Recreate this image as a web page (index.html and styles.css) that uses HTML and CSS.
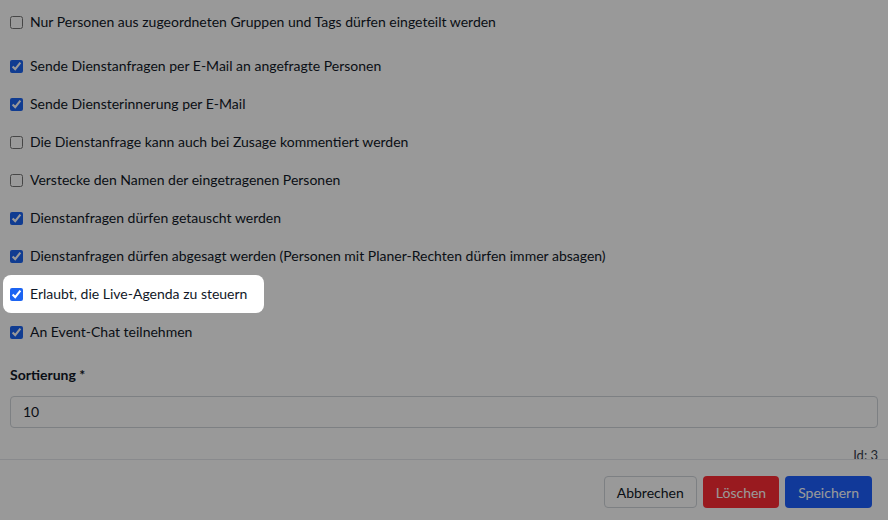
FILE: index.html
```html
<!DOCTYPE html>
<html lang="de">
<head>
<meta charset="utf-8">
<link rel="stylesheet" href="styles.css">
</head>
<body>
<div class="modal">
  <div class="modal-body">
    <div class="group first">
      <label class="row"><input type="checkbox"><span>Nur Personen aus zugeordneten Gruppen und Tags dürfen eingeteilt werden</span></label>
    </div>
    <div class="group">
      <label class="row"><input type="checkbox" checked><span>Sende Dienstanfragen per E-Mail an angefragte Personen</span></label>
      <label class="row"><input type="checkbox" checked><span>Sende Diensterinnerung per E-Mail</span></label>
      <label class="row"><input type="checkbox"><span>Die Dienstanfrage kann auch bei Zusage kommentiert werden</span></label>
      <label class="row"><input type="checkbox"><span>Verstecke den Namen der eingetragenen Personen</span></label>
      <label class="row"><input type="checkbox" checked><span>Dienstanfragen dürfen getauscht werden</span></label>
      <label class="row"><input type="checkbox" checked><span>Dienstanfragen dürfen abgesagt werden (Personen mit Planer-Rechten dürfen immer absagen)</span></label>
      <label class="row spot"><input type="checkbox" checked><span>Erlaubt, die Live-Agenda zu steuern</span></label>
      <label class="row"><input type="checkbox" checked><span>An Event-Chat teilnehmen</span></label>
    </div>
    <div class="field">
      <div class="field-label">Sortierung <span class="req">*</span></div>
      <div class="input">10</div>
    </div>
    <div class="meta">Id: 3</div>
  </div>
  <div class="modal-footer">
    <button class="btn btn-light">Abbrechen</button>
    <button class="btn btn-danger">Löschen</button>
    <button class="btn btn-primary">Speichern</button>
  </div>
  <div class="overlay"></div>
</div>
</body>
</html>
```

FILE: styles.css
```css
html, body {
  margin: 0;
  padding: 0;
  background: #fff;
}
body {
  font-family: Lato, "Noto Sans", sans-serif;
  font-size: 14px;
  color: #111827;
}
.modal {
  width: 888px;
  height: 520px;
  display: flex;
  flex-direction: column;
  background: #fff;
}
.modal-body {
  height: 459px;
  overflow: hidden;
  padding: 12px 10px 0 10px;
  box-sizing: border-box;
  display: flex;
  flex-direction: column;
}
.group {
  display: flex;
  flex-direction: column;
  gap: 18px;
}
.group.first {
  margin-bottom: 24px;
}
.row {
  display: flex;
  align-items: center;
  gap: 7px;
  line-height: 20px;
  height: 20px;
  width: fit-content;
}
.row input {
  margin: 0;
  width: 13px;
  height: 13px;
  accent-color: #1c64f2;
}
.spot {
  position: relative;
  z-index: 10;
  background: #fff;
  border-radius: 8px;
  padding: 9px 17px 9px 7px;
  margin: -9px -17px -9px -7px;
}
.field {
  margin-top: 23px;
}
.field-label {
  font-weight: 700;
  line-height: 20px;
}
.req {
  font-weight: 700;
}
.input {
  margin-top: 11px;
  height: 32px;
  box-sizing: border-box;
  border: 1px solid #d1d5db;
  border-radius: 4px;
  padding: 0 12px;
  line-height: 30px;
  background: #fff;
}
.meta {
  margin-top: 19px;
  text-align: right;
  font-size: 13px;
  line-height: 16px;
  color: #374151;
}
.modal-footer {
  border-top: 1px solid #e5e7eb;
  flex: 1;
  display: flex;
  justify-content: flex-end;
  align-items: flex-start;
  gap: 6px;
  padding: 16px 16px 0 0;
}
.btn {
  font-family: Lato, "Noto Sans", sans-serif;
  font-size: 14px;
  height: 32px;
  padding: 0 12px;
  border-radius: 4px;
  border: 1px solid transparent;
  cursor: pointer;
}
.btn-light {
  background: #fff;
  border-color: #d1d5db;
  color: #111827;
}
.btn-danger {
  background: #ff2c35;
  color: #fff;
}
.btn-primary {
  background: #1d5fff;
  color: #fff;
}
.overlay {
  position: fixed;
  inset: 0;
  background: rgba(0, 0, 0, 0.4);
  z-index: 5;
}
```
